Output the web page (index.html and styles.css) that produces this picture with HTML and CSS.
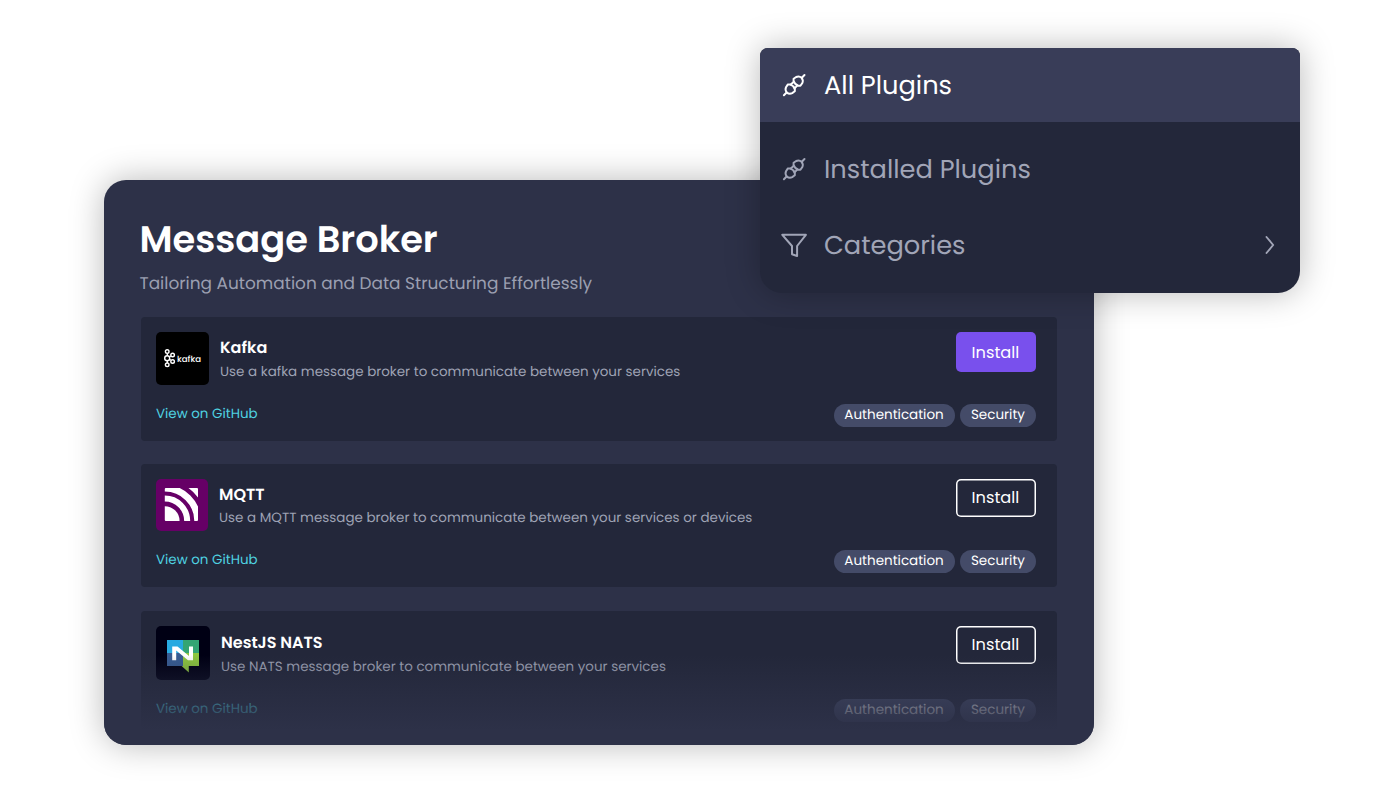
FILE: index.html
```
<!DOCTYPE html>
<html lang="en">
<head>
<meta charset="utf-8">
<title>Plugins</title>
<link rel="stylesheet" href="styles.css">
</head>
<body>
<svg class="defs" width="0" height="0">
  <symbol id="plug" viewBox="0 0 24 24">
    <g fill="none" stroke="currentColor" stroke-width="2" stroke-linecap="round" stroke-linejoin="round">
      <path d="M22.5 2 L19.8 4.7"/>
      <path d="M1.9 22.2 L4.6 19.5"/>
      <path d="M11.6 5.8 L11.6 8.2 A8 8 0 0 0 16.2 12.8 L18.4 12.8 L20.2 10.2 A5 5 0 0 0 19.6 4.8 A5 5 0 0 0 14.2 4 Z"/>
      <path d="M5.9 11.4 L8.2 11.4 A8 8 0 0 1 12.8 16 L12.8 18.3 L10.2 20.1 A5 5 0 0 1 4.8 19.4 A5 5 0 0 1 4 14.2 Z"/>
      <path d="M8.8 11.6 L11.6 9"/>
      <path d="M12.6 15.4 L15.2 12.6"/>
    </g>
  </symbol>
</svg>
<main class="stage">
  <section class="panel">
    <h1 class="title">Message Broker</h1>
    <p class="subtitle">Tailoring Automation and Data Structuring Effortlessly</p>

    <div class="cards">
      <article class="card card-kafka">
        <div class="card-top">
          <svg class="logo" width="53" height="53" viewBox="0 0 53 53">
            <rect width="53" height="53" rx="5" fill="#000"/>
            <g fill="none" stroke="#fff" stroke-width="1.4">
              <path d="M11.3 21.2V23.5M11.3 28.9V31.1M13.6 24.7L14.8 24.1M13.6 27.5L14.8 28.2"/>
              <circle cx="11.2" cy="19.6" r="1.8"/>
              <circle cx="11.2" cy="26.2" r="2.5"/>
              <circle cx="11.2" cy="32.8" r="1.8"/>
              <circle cx="16.6" cy="23" r="1.8"/>
              <circle cx="16.6" cy="29.5" r="1.8"/>
            </g>
            <text x="21" y="29.8" class="logo-text">kafka</text>
          </svg>
          <div class="info">
            <h2 class="name">Kafka</h2>
            <p class="desc">Use a kafka message broker to communicate between your services</p>
          </div>
          <button class="install install-primary">Install</button>
        </div>
        <div class="card-foot">
          <a class="link">View on GitHub</a>
          <div class="tags"><span class="tag">Authentication</span><span class="tag">Security</span></div>
        </div>
      </article>

      <article class="card card-mqtt">
        <div class="card-top">
          <svg class="logo" width="52" height="52" viewBox="0 0 52 52">
            <clipPath id="mq"><rect x="8.8" y="9" width="33.2" height="33" rx="1"/></clipPath>
            <rect width="52" height="52" rx="5" fill="#660066"/>
            <g clip-path="url(#mq)" fill="none" stroke="#fff">
              <circle cx="8.8" cy="42" r="14.8" fill="#fff" stroke="none"/>
              <circle cx="8.8" cy="42" r="22.4" stroke-width="6"/>
              <circle cx="8.8" cy="42" r="32.8" stroke-width="6.6"/>
              <path d="M32.5 9H42V18.5Q38 13 32.5 9Z" fill="#fff" stroke="none"/>
            </g>
          </svg>
          <div class="info">
            <h2 class="name">MQTT</h2>
            <p class="desc">Use a MQTT message broker to communicate between your services or devices</p>
          </div>
          <button class="install">Install</button>
        </div>
        <div class="card-foot">
          <a class="link">View on GitHub</a>
          <div class="tags"><span class="tag">Authentication</span><span class="tag">Security</span></div>
        </div>
      </article>

      <article class="card card-nats">
        <div class="card-top">
          <svg class="logo" width="54" height="54" viewBox="0 0 54 54">
            <rect width="54" height="54" rx="5" fill="#000014"/>
            <path d="M11 14H27V27H11Z" fill="#27aae1"/>
            <path d="M27 14H43V27H27Z" fill="#34a574"/>
            <path d="M11 27H27V40H11Z" fill="#375c93"/>
            <path d="M27 27H43V40H32.8V46.6L25.6 40H27Z" fill="#8dc63f"/>
            <path d="M16.2 20.4H21.5L33 30V20.4H37V34.2H32L20.2 24.6V34.2H16.2Z" fill="#fff"/>
          </svg>
          <div class="info">
            <h2 class="name">NestJS NATS</h2>
            <p class="desc">Use NATS message broker to communicate between your services</p>
          </div>
          <button class="install">Install</button>
        </div>
        <div class="card-foot">
          <a class="link">View on GitHub</a>
          <div class="tags"><span class="tag">Authentication</span><span class="tag">Security</span></div>
        </div>
      </article>
    </div>
    <div class="fade"></div>
  </section>

  <nav class="menu">
    <a class="item item-active"><svg class="icon" width="24" height="24"><use href="#plug"/></svg>All Plugins</a>
    <a class="item"><svg class="icon" width="24" height="24"><use href="#plug"/></svg>Installed Plugins</a>
    <a class="item item-last"><svg class="icon icon-funnel" width="26" height="24" viewBox="0 0 26 24" fill="none" stroke="currentColor" stroke-width="2" stroke-linejoin="round"><path d="M1.3 1.8H24.9L16.1 13V23L11 21.2V13Z"/></svg>Categories
      <svg class="chevron" width="10" height="18" viewBox="0 0 10 18" fill="none" stroke="currentColor" stroke-width="1.9" stroke-linecap="round" stroke-linejoin="round"><path d="M1.5 1L8.2 9L1.5 17"/></svg></a>
  </nav>
</main>
</body>
</html>
```
FILE: styles.css
```
* { box-sizing: border-box; }

body {
  margin: 0;
  background: #fff;
  font-family: Poppins, Inter, sans-serif;
  text-rendering: geometricPrecision;
}

.defs { display: block; position: absolute; }

.stage {
  position: relative;
  width: 1400px;
  height: 800px;
  padding: 179.5px 0 0 104.3px;
  overflow: hidden;
}

.panel {
  position: relative;
  width: 989.7px;
  height: 565.5px;
  padding: 31.5px 36.7px 0;
  border-radius: 22px;
  background: #2d3148;
  box-shadow: 0 0 34px rgba(0, 0, 0, 0.28);
  overflow: hidden;
}

h1, h2, p { margin: 0; }

.title {
  margin-left: -1.6px;
  font-size: 36.8px;
  font-weight: 600;
  line-height: 56px;
  color: #fff;
}

.subtitle {
  margin: 4px 0 0 -1.5px;
  font-size: 16.96px;
  line-height: 24px;
  color: #a1a5b7;
  opacity: 0.95;
}

.cards {
  display: flex;
  flex-direction: column;
  gap: 23px;
  margin-top: 22px;
}

.card {
  display: flex;
  flex-direction: column;
  justify-content: space-between;
  height: 124px;
  padding: 15px 21px 14px 15px;
  border-radius: 4px;
  background: #23273a;
}

.card-mqtt { height: 123px; }
.card-nats { height: 125px; margin-top: 1px; }

.card-top {
  display: flex;
  align-items: flex-start;
  height: 54px;
}

.logo { display: block; flex: none; }

.logo-text {
  font-size: 8.6px;
  font-weight: 500;
  fill: #fff;
}

.info {
  flex: 1;
  margin-left: 11px;
  padding-top: 3.5px;
}

.card-nats .info { padding-top: 4.5px; }

.name {
  font-size: 16.05px;
  font-weight: 600;
  line-height: 24px;
  color: #fff;
}

.desc {
  margin-top: 2px;
  font-size: 13.46px;
  line-height: 20px;
  color: #9ea2b4;
}

.card-mqtt .desc { margin-top: 1.4px; }

.install {
  width: 80.8px;
  height: 38px;
  padding: 0 1px 0 0;
  border: 0;
  border-radius: 5px;
  background: transparent;
  box-shadow: inset 0 0 0 1.5px #fff;
  font: 400 16.2px/24px Poppins, Inter, sans-serif;
  color: #fff;
}

.install-primary {
  height: 40px;
  padding-top: 1px;
  background: #7950ed;
  box-shadow: none;
}

.card-foot {
  display: flex;
  justify-content: space-between;
  align-items: flex-start;
}

.link {
  font-size: 13.43px;
  line-height: 19.5px;
  color: #4fd1e0;
}

.tags { display: flex; gap: 5px; }

.tag {
  height: 23px;
  padding: 0 11.4px 0 10.8px;
  border-radius: 12px;
  background: #444b68;
  font-size: 13.5px;
  line-height: 22px;
  color: #fff;
}

.fade {
  position: absolute;
  left: 0;
  right: 0;
  bottom: 0;
  height: 90px;
  background: linear-gradient(rgba(45, 49, 72, 0), rgba(45, 49, 72, 0.7) 59%, #2d3148 84%);
}

/* Dropdown floating over the panel's corner */
.menu {
  position: absolute;
  left: 760px;
  top: 48px;
  width: 540px;
  height: 245px;
  border-radius: 8px 8px 22px 22px;
  background: #23273a;
  box-shadow: 0 0 34px rgba(0, 0, 0, 0.28);
  overflow: hidden;
}

.item {
  display: flex;
  align-items: center;
  height: 77px;
  padding: 0 25px 0 22px;
  font-size: 25.7px;
  line-height: 38px;
  color: #a1a5b7;
}

.item-active {
  height: 74px;
  margin-bottom: 8px;
  background: #393d58;
  color: #fff;
}

.item-last { height: 75px; }

.icon { flex: none; margin-right: 18px; }
.icon-funnel { margin: 0 17px 0 -1px; }
.chevron { margin-left: auto; }
```
